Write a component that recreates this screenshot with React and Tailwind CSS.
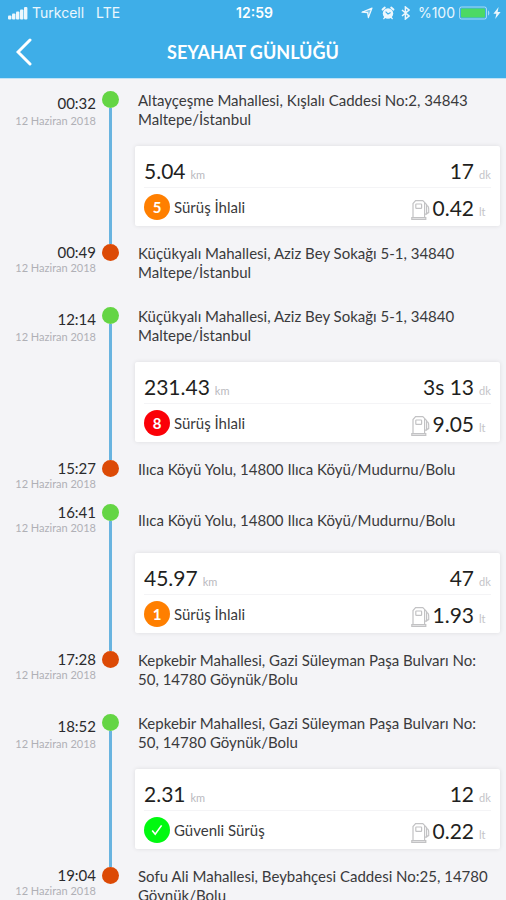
import React from "react";
import clsx from "clsx";

const trips = [
  {
    id: 1,
    start: {
      time: "00:32",
      date: "12 Haziran 2018",
      address: "Altayçeşme Mahallesi, Kışlalı Caddesi No:2, 34843 Maltepe/İstanbul",
    },
    end: {
      time: "00:49",
      date: "12 Haziran 2018",
      address: "Küçükyalı Mahallesi, Aziz Bey Sokağı 5-1, 34840 Maltepe/İstanbul",
    },
    distance: "5.04",
    duration: "17",
    fuel: "0.42",
    violations: 5,
  },
  {
    id: 2,
    start: {
      time: "12:14",
      date: "12 Haziran 2018",
      address: "Küçükyalı Mahallesi, Aziz Bey Sokağı 5-1, 34840 Maltepe/İstanbul",
    },
    end: {
      time: "15:27",
      date: "12 Haziran 2018",
      address: "Ilıca Köyü Yolu, 14800 Ilıca Köyü/Mudurnu/Bolu",
    },
    distance: "231.43",
    duration: "3s 13",
    fuel: "9.05",
    violations: 8,
  },
  {
    id: 3,
    compact: true,
    start: {
      time: "16:41",
      date: "12 Haziran 2018",
      address: "Ilıca Köyü Yolu, 14800 Ilıca Köyü/Mudurnu/Bolu",
    },
    end: {
      time: "17:28",
      date: "12 Haziran 2018",
      address: "Kepkebir Mahallesi, Gazi Süleyman Paşa Bulvarı No: 50, 14780 Göynük/Bolu",
    },
    distance: "45.97",
    duration: "47",
    fuel: "1.93",
    violations: 1,
  },
  {
    id: 4,
    start: {
      time: "18:52",
      date: "12 Haziran 2018",
      address: "Kepkebir Mahallesi, Gazi Süleyman Paşa Bulvarı No: 50, 14780 Göynük/Bolu",
    },
    end: {
      time: "19:04",
      date: "12 Haziran 2018",
      address: "Sofu Ali Mahallesi, Beybahçesi Caddesi No:25, 14780 Göynük/Bolu",
    },
    distance: "2.31",
    duration: "12",
    fuel: "0.22",
    violations: 0,
  },
];

const FuelIcon = () => (
  <svg
    viewBox="0 0 20 22"
    className="h-[22px] w-5 text-[#c2c2c4]"
    fill="none"
    stroke="currentColor"
    strokeWidth="1.2"
    aria-hidden="true"
  >
    <path d="M2 18.6V4.5L4.6 1.6h7.2L13.6 3.4v15.2" />
    <path d="M0.8 18.6h14v1.8h-14z" />
    <rect x="4.8" y="5" width="5.8" height="4.4" rx="0.6" />
    <path d="M13.6 3.6l2 2v9.6h-2M15.6 6.2c2 .8 2.3 2 2.1 7.4l-2.1 1" />
  </svg>
);

const StatusBar = () => (
  <div className="flex h-[26px] items-center justify-between pr-[5px] pl-2 font-[Inter,sans-serif] text-sm text-white/90">
    <div className="flex flex-1 items-center">
      <svg viewBox="0 0 20 13" className="h-[13px] w-5" fill="currentColor" aria-hidden="true">
        <rect x="0" y="8.5" width="3.4" height="4" rx="1" />
        <rect x="4" y="6.5" width="3.4" height="6" rx="1" />
        <rect x="8" y="4.5" width="3.4" height="8" rx="1" />
        <rect x="12" y="2.5" width="3.4" height="10" rx="1" />
        <rect x="16" y="0" width="3.4" height="12.5" rx="1" />
      </svg>
      <span className="ml-1">Turkcell</span>
      <span className="ml-3">LTE</span>
    </div>
    <span className="font-semibold text-white">12:59</span>
    <div className="flex flex-1 items-center justify-end">
      <svg viewBox="0 0 12 12" className="size-3" aria-hidden="true">
        <path
          d="M11 1L7.4 10.6 6.6 5.6 1 5.2z"
          fill="currentColor"
          fillOpacity="0.4"
          stroke="currentColor"
          strokeWidth="1.2"
          strokeLinejoin="round"
        />
      </svg>
      <svg viewBox="0 0 14 14" className="ml-2 size-[14px]" aria-hidden="true">
        <circle cx="7" cy="7.5" r="5.2" fill="currentColor" />
        <path d="M1.6 3.6L3.8 1.6M12.4 3.6L10.2 1.6" stroke="currentColor" strokeWidth="2" strokeLinecap="round" />
        <path d="M3.8 11.4l-1 1.2M10.2 11.4l1 1.2" stroke="currentColor" strokeWidth="1.4" strokeLinecap="round" />
        <path d="M4.6 5.6L7 8l2.6-1.4" fill="none" stroke="#3eaee8" strokeWidth="1.1" />
      </svg>
      <svg viewBox="0 0 9 14" className="ml-[6px] h-[14px] w-[9px]" fill="none" stroke="currentColor" strokeWidth="1.5" aria-hidden="true">
        <path d="M1 4l7 6-3.6 3V1L8 4l-7 6" />
      </svg>
      <span className="ml-2">%100</span>
      <svg viewBox="0 0 32 14" className="ml-1 h-[14px] w-8" aria-hidden="true">
        <rect x="0.5" y="1" width="27" height="12" rx="2" fill="none" stroke="currentColor" strokeOpacity="0.6" />
        <rect x="2" y="2.5" width="24" height="9" rx="1" fill="#4cd964" />
        <path d="M29 4.5c1.8.6 1.8 4.4 0 5z" fill="currentColor" fillOpacity="0.6" />
      </svg>
      <svg viewBox="0 0 8 12" className="ml-[2px] h-3 w-2" fill="currentColor" aria-hidden="true">
        <path d="M5.6 0L0.4 6.8h3L2.2 12 7.6 5h-3z" />
      </svg>
    </div>
  </div>
);

const Header = () => (
  <header className="sticky top-0 z-10 border-b border-[#bfe3f7] bg-[#3eaee8]">
    <StatusBar />
    <div className="grid grid-cols-[48px_1fr_48px] items-center">
      <button type="button" aria-label="Geri" className="flex h-[52px] items-center pl-4 text-white">
        <svg viewBox="0 0 16 28" className="h-7 w-4" fill="none" stroke="currentColor" strokeWidth="3" strokeLinecap="round" aria-hidden="true">
          <path d="M14 2L2 14l12 12" />
        </svg>
      </button>
      <h1 className="text-center text-lg font-bold text-white">SEYAHAT GÜNLÜĞÜ</h1>
    </div>
  </header>
);

const StopTime = ({ stop, spaced }) => (
  <div className={clsx("w-24 shrink-0 text-right", spaced && "pt-1")}>
    <div className="h-4 text-[15px] leading-4 text-[#2b2b2d]">{stop.time}</div>
    <div className={clsx("h-4 text-[11px] leading-4 text-[#b0b0b6]", spaced && "mt-[2px]")}>
      {stop.date}
    </div>
  </div>
);

const Line = ({ className }) => (
  <span className={clsx("w-[3px] bg-[#69b4e0]", className)} />
);

const ViolationBadge = ({ count }) => (
  <span
    className={clsx(
      "flex size-[26px] items-center justify-center rounded-full text-[15px] font-bold text-white",
      count === 0 && "bg-[#00f910]",
      count > 0 && count < 6 && "bg-[#ff7f00]",
      count >= 6 && "bg-[#fb0007]"
    )}
  >
    {count > 0 ? (
      count
    ) : (
      <svg viewBox="0 0 12 12" className="size-3" fill="none" stroke="currentColor" strokeWidth="1.6" aria-hidden="true">
        <path d="M1.2 6.6l3 3.6L10.6 1.4" />
      </svg>
    )}
  </span>
);

const TripCard = ({ trip }) => (
  <div className="mr-[6px] ml-[7px] flex-1 rounded-xs bg-white px-[9px] shadow-[0_0_4px_rgba(0,0,0,0.1)]">
    <div className="flex h-[42px] items-end justify-between border-b border-[#f4f4f6] text-[21px] leading-6 text-[#1f1f21]">
      <div>
        {trip.distance}
        <span className="ml-[5px] text-[11px] text-[#b9b9be]">km</span>
      </div>
      <div className="flex items-baseline">
        {trip.duration}
        <span className="ml-[5px] w-3 text-[11px] text-[#c4c4c8]">dk</span>
      </div>
    </div>
    <div className="flex h-[38px] items-center justify-between">
      <div className="flex items-center text-[15px] text-[#3a3a3c]">
        <ViolationBadge count={trip.violations} />
        <span className="ml-1">{trip.violations > 0 ? "Sürüş İhlali" : "Güvenli Sürüş"}</span>
      </div>
      <div className="flex items-center pt-[6px]">
        <FuelIcon />
        <div className="ml-[2px] flex items-baseline text-[21px] leading-6 text-[#1f1f21]">
          {trip.fuel}
          <span className="ml-[5px] w-3 text-[11px] text-[#c4c4c8]">lt</span>
        </div>
      </div>
    </div>
  </div>
);

const Trip = ({ trip }) => (
  <li>
    <div className="flex">
      <StopTime stop={trip.start} spaced={!trip.compact} />
      <div className="flex w-8 shrink-0 flex-col items-center pr-[3px]">
        <span className="size-[17px] shrink-0 rounded-full bg-[#64d544]" />
        <Line className="flex-1" />
      </div>
      <p className="flex flex-1 items-center pr-4 pl-[10px] text-[15px] leading-[19px] text-[#3a3a3c]">
        {trip.start.address}
      </p>
    </div>
    <div className="flex">
      <div className="flex w-32 shrink-0 justify-end pr-4">
        <Line />
      </div>
      <div className="flex flex-1 pt-[17px] pb-[18px]">
        <TripCard trip={trip} />
      </div>
    </div>
    <div className="flex">
      <StopTime stop={trip.end} />
      <div className="flex w-8 shrink-0 flex-col items-center pr-[3px]">
        <span className="size-[17px] shrink-0 rounded-full bg-[#dc4a06]" />
      </div>
      <p className="flex-1 pr-4 pb-[25px] pl-[10px] text-[15px] leading-[19px] text-[#3a3a3c]">
        {trip.end.address}
      </p>
    </div>
  </li>
);

const App = () => {
  return (
    <div className="min-h-screen bg-[#f4f4f7] font-[Lato,sans-serif]">
      <Header />
      <main className="pt-3">
        <ul>
          {trips.map((trip) => (
            <Trip key={trip.id} trip={trip} />
          ))}
        </ul>
      </main>
    </div>
  );
};

export default App;
